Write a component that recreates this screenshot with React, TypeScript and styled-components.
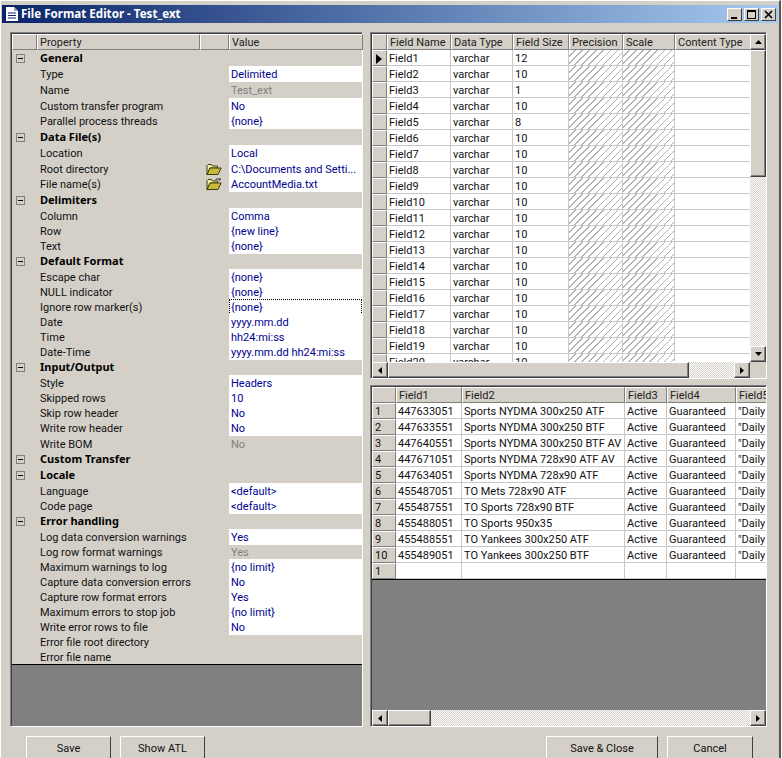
import React from "react";
import styled, { createGlobalStyle } from "styled-components";

const Global = createGlobalStyle`
  html, body { margin: 0; padding: 0; background: #fff; }
  #root { width: 782px; height: 758px; overflow: hidden; }
  * { box-sizing: border-box; }
`;
const FONT = `"Roboto", "Liberation Sans", sans-serif`;
const BOLD = `"Noto Sans", "Liberation Sans", sans-serif`;
const BG = "#d4d0c8";
const DITHER = `repeating-conic-gradient(#d4d0c8 0 25%, #fff 0 50%) 0 0 / 2px 2px`;
const BEVEL = `border: 1px solid; border-color: #fff #808080 #808080 #fff;`;

const Shell = styled.div`
  width: 781px; height: 758px; overflow: hidden; background: ${BG};
  border-top: 1px solid #fff; border-right: 2px solid #555; border-left: 1px solid #fff;
  font: 11px/15px ${FONT}; color: #111; display: flex; flex-direction: column; padding-top: 4px;
`;
const TitleBar = styled.div`
  flex: none; height: 18px; margin: 0 1px 0 1px; padding-left: 4px;
  background: linear-gradient(90deg, #0a246a 0%, #a6caf0 100%);
  display: flex; align-items: center;
`;
const TitleText = styled.span`
  color: #fff; font: bold 11.6px/18px ${BOLD}; flex: 1; margin-left: 3px;
`;
const WinBtn = styled.div`
  width: 15px; height: 13px; margin-right: 2px; background: ${BG};
  border: 1px solid; border-color: #fff #404040 #404040 #fff;
  display: flex; align-items: center; justify-content: center;
`;
const Main = styled.div`
  flex: none; display: flex; gap: 7px; margin-top: 9px; padding-left: 9px;
`;
const Sunken = styled.div`
  border: 1px solid; border-color: #808080 #fff #fff #808080;
  box-shadow: inset 1px 1px 0 #404040;
  padding: 1px 0 0 1px; background: ${BG};
`;
const LeftPanel = styled(Sunken)`
  width: 353px; height: 695px; display: flex; flex-direction: column;
`;
const RightColumn = styled.div`
  width: 397px; display: flex; flex-direction: column; gap: 6px;
`;
const TopGrid = styled(Sunken)`
  height: 347px; display: flex; flex-direction: column;
`;
const BottomGrid = styled(Sunken)`
  height: 342px; display: flex; flex-direction: column; overflow: hidden;
`;
const PropHead = styled.div`
  flex: none; height: 16px; display: grid; grid-template-columns: 25px 163px 29px 134px;
`;
const HeadCell = styled.div`
  background: ${BG}; ${BEVEL} padding: 1px 0 0 2px; color: #222; line-height: 13px; white-space: nowrap; overflow: hidden;
`;
const PropList = styled.div`
  flex: none; border-bottom: 1px solid #000; padding-bottom: 0;
`;
const PropRow = styled.div<{ $h: number }>`
  height: ${p => p.$h}px; display: grid; grid-template-columns: 28px 161px 28px 134px; align-items: stretch;
`;
const Exp = styled.div`
  display: flex; align-items: center; padding-left: 4px;
`;
const ExpBox = styled.div`
  width: 9px; height: 9px; border: 1px solid #808080; display: flex; align-items: center; justify-content: center;
  &::after { content: ""; width: 5px; height: 1px; background: #000; }
`;
const GroupLabel = styled.div`
  font: bold 11px/15px ${BOLD}; color: #000; white-space: nowrap; display: flex; align-items: center; padding-bottom: 1px;
`;
const PropLabel = styled.div`
  white-space: nowrap; display: flex; align-items: center; padding-top: 1px;
`;
const IconSlot = styled.div`
  display: flex; align-items: center; padding-left: 5px;
`;
const PropValue = styled.div<{ $off?: boolean; $blank?: boolean; $focus?: boolean }>`
  background: ${p => (p.$off || p.$blank ? "transparent" : "#fff")};
  color: ${p => (p.$off ? "#808080" : "#000090")};
  padding: 1px 0 0 2px; margin-right: 1px; white-space: nowrap; overflow: hidden; display: flex; align-items: center;
  outline: ${p => (p.$focus ? "1px dotted #000" : "none")}; outline-offset: -1px;
`;
const DarkArea = styled.div`
  flex: 1; background: #808080;
`;
const GridHead = styled.div<{ $cols: string }>`
  flex: none; height: 16px; display: grid; grid-template-columns: ${p => p.$cols}; overflow: hidden;
`;
const GridRow = styled.div<{ $cols: string }>`
  flex: none; height: 16px; display: grid; grid-template-columns: ${p => p.$cols}; overflow: hidden;
`;
const RowHead = styled.div`
  background: ${BG}; ${BEVEL} padding: 1px 0 0 2px; line-height: 13px; display: flex; align-items: center;
`;
const Cell = styled.div`
  background: #fff; border-right: 1px solid #c8c8c8; border-bottom: 1px solid #c8c8c8;
  padding: 1px 0 0 2px; line-height: 16px; white-space: nowrap; overflow: hidden;
`;
const Hatch = styled.div`
  border-right: 1px solid #c8c8c8; border-bottom: 1px solid #c8c8c8;
  background: repeating-linear-gradient(135deg, #fff 0 4px, #b4b4b4 4px 5px);
`;
const TopBody = styled.div`
  flex: none; height: 328px; display: flex;
`;
const TopContent = styled.div`
  flex: 1; overflow: hidden; display: flex; flex-direction: column; min-width: 0;
`;
const TopViewport = styled.div`
  flex: 1; overflow: hidden; display: flex; flex-direction: column; background: #fff;
`;
const VScroll = styled.div`
  flex: none; width: 16px; display: flex; flex-direction: column; background: ${DITHER};
`;
const ScrollBtn = styled.div`
  flex: none; width: 16px; height: 16px; background: ${BG};
  border: 1px solid; border-color: #fff #404040 #404040 #fff;
  display: flex; align-items: center; justify-content: center;
  box-shadow: inset -1px -1px 0 #808080;
`;
const VThumb = styled.div`
  flex: none; height: 127px; background: ${BG};
  border: 1px solid; border-color: #fff #404040 #404040 #fff;
  box-shadow: inset -1px -1px 0 #808080;
`;
const Spacer = styled.div`
  flex: 1;
`;
const HScroll = styled.div`
  flex: none; height: 16px; display: flex; background: ${DITHER};
`;
const HThumb = styled.div<{ $w: number }>`
  flex: none; width: ${p => p.$w}px; background: ${BG};
  border: 1px solid; border-color: #fff #404040 #404040 #fff;
  box-shadow: inset -1px -1px 0 #808080;
`;
const Corner = styled.div`
  flex: none; width: 16px; background: ${BG};
`;
const NewRowEnd = styled.div`
  flex: none; height: 1px; background: #000;
`;
const Footer = styled.div`
  flex: none; display: flex; margin-top: 9px; padding-left: 25px; gap: 9px; width: 752px;
`;
const Btn = styled.div<{ $w: number }>`
  flex: none; width: ${p => p.$w}px; height: 26px; background: ${BG};
  border: 1px solid; border-color: #fff #404040 #404040 #fff; text-align: center; line-height: 24px; color: #111;
`;
const FooterGap = styled.div`
  flex: 1;
`;

const Arrow = ({ d }: { d: "up" | "down" | "left" | "right" }) => {
  const pts = { up: "0,4 7,4 3.5,0", down: "0,0 7,0 3.5,4", left: "4,0 4,7 0,3.5", right: "0,0 0,7 4,3.5" }[d];
  const wide = d === "up" || d === "down";
  return <svg width={wide ? 7 : 4} height={wide ? 4 : 7}><polygon points={pts} fill="#000" /></svg>;
};
const Folder = ({ open }: { open?: boolean }) => (
  <svg width="16" height="13" viewBox="0 0 16 13">
    <path d="M1 2.5 L2 1.5 H5.5 L6.5 3 H11.5 V5 H4 L1 11.5 Z" fill="#f4f0a0" stroke="#3c3c10" strokeWidth="1" />
    <path d="M4 5 H15.2 L12 11.5 H1 Z" fill="#c8b838" stroke="#3c3c10" strokeWidth="1" />
    {open && <path d="M9 2.5 C10 .6 12.5 .2 14 1.5 M14.2 .2 V2 H12.4" fill="none" stroke="#222" strokeWidth="0.9" />}
  </svg>
);
const DocIcon = () => (
  <svg width="12" height="14" viewBox="0 0 12 14">
    <path d="M0 0 H8 L12 4 V14 H0 Z" fill="#fff" />
    <path d="M2 6 H10 M2 8.5 H10 M2 11 H10" stroke="#0a246a" strokeWidth="1" />
    <path d="M8 0 V4 H12 Z" fill="#8e9cc4" />
  </svg>
);

type P = { g?: boolean; l: string; v?: string; h: number; off?: boolean; blank?: boolean; focus?: boolean; icon?: 1 | 2 };
const props: P[] = [
  { g: true, l: "General", h: 16 },
  { l: "Type", v: "Delimited", h: 16 },
  { l: "Name", v: "Test_ext", h: 16, off: true },
  { l: "Custom transfer program", v: "No", h: 15 },
  { l: "Parallel process threads", v: "{none}", h: 16 },
  { g: true, l: "Data File(s)", h: 16 },
  { l: "Location", v: "Local", h: 16 },
  { l: "Root directory", v: "C:\\Documents and Setti...", h: 15, icon: 1 },
  { l: "File name(s)", v: "AccountMedia.txt", h: 16, icon: 2 },
  { g: true, l: "Delimiters", h: 16 },
  { l: "Column", v: "Comma", h: 15 },
  { l: "Row", v: "{new line}", h: 15 },
  { l: "Text", v: "{none}", h: 15 },
  { g: true, l: "Default Format", h: 16 },
  { l: "Escape char", v: "{none}", h: 15 },
  { l: "NULL indicator", v: "{none}", h: 15 },
  { l: "Ignore row marker(s)", v: "{none}", h: 15, focus: true },
  { l: "Date", v: "yyyy.mm.dd", h: 15 },
  { l: "Time", v: "hh24:mi:ss", h: 15 },
  { l: "Date-Time", v: "yyyy.mm.dd hh24:mi:ss", h: 15 },
  { g: true, l: "Input/Output", h: 16 },
  { l: "Style", v: "Headers", h: 15 },
  { l: "Skipped rows", v: "10", h: 15 },
  { l: "Skip row header", v: "No", h: 15 },
  { l: "Write row header", v: "No", h: 16 },
  { l: "Write BOM", v: "No", h: 15, off: true },
  { g: true, l: "Custom Transfer", h: 16 },
  { g: true, l: "Locale", h: 16 },
  { l: "Language", v: "<default>", h: 15 },
  { l: "Code page", v: "<default>", h: 15 },
  { g: true, l: "Error handling", h: 16 },
  { l: "Log data conversion warnings", v: "Yes", h: 15 },
  { l: "Log row format warnings", v: "Yes", h: 15, off: true },
  { l: "Maximum warnings to log", v: "{no limit}", h: 15 },
  { l: "Capture data conversion errors", v: "No", h: 15 },
  { l: "Capture row format errors", v: "Yes", h: 15 },
  { l: "Maximum errors to stop job", v: "{no limit}", h: 15 },
  { l: "Write error rows to file", v: "No", h: 15 },
  { l: "Error file root directory", h: 15, blank: true },
  { l: "Error file name", h: 15, blank: true },
];

const fieldSizes = [12, 10, 1, 10, 8, 10, 10, 10, 10, 10, 10, 10, 10, 10, 10, 10, 10, 10, 10, 10];
const TOP_COLS = "15px 64px 62px 56px 54px 52px 77px";
const BOT_COLS = "24px 66px 163px 42px 69px 32px";
const data = [
  ["447633051", "Sports NYDMA 300x250 ATF"],
  ["447633551", "Sports NYDMA 300x250 BTF"],
  ["447640551", "Sports NYDMA 300x250 BTF AV"],
  ["447671051", "Sports NYDMA 728x90 ATF AV"],
  ["447634051", "Sports NYDMA 728x90 ATF"],
  ["455487051", "TO Mets 728x90 ATF"],
  ["455487551", "TO Sports 728x90 BTF"],
  ["455488051", "TO Sports 950x35"],
  ["455488551", "TO Yankees 300x250 ATF"],
  ["455489051", "TO Yankees 300x250 BTF"],
];

export default function App() {
  return (
    <Shell>
      <Global />
      <TitleBar>
        <DocIcon />
        <TitleText>File Format Editor - Test_ext</TitleText>
        <WinBtn>
          <svg width="9" height="9"><rect x="1" y="7" width="6" height="2" fill="#000" /></svg>
        </WinBtn>
        <WinBtn>
          <svg width="9" height="9"><rect x="0.5" y="1" width="8" height="7.5" fill="none" stroke="#000" /><rect x="0" y="0" width="9" height="2" fill="#000" /></svg>
        </WinBtn>
        <WinBtn>
          <svg width="9" height="9"><path d="M1 1 L8 8 M8 1 L1 8" stroke="#000" strokeWidth="1.6" /></svg>
        </WinBtn>
      </TitleBar>
      <Main>
        <LeftPanel>
          <PropHead>
            <HeadCell />
            <HeadCell>Property</HeadCell>
            <HeadCell />
            <HeadCell>Value</HeadCell>
          </PropHead>
          <PropList>
            {props.map(p =>
              p.g ? (
                <PropRow key={p.l} $h={p.h}>
                  <Exp><ExpBox /></Exp>
                  <GroupLabel>{p.l}</GroupLabel>
                </PropRow>
              ) : (
                <PropRow key={p.l} $h={p.h}>
                  <Exp />
                  <PropLabel>{p.l}</PropLabel>
                  <IconSlot>{p.icon ? <Folder open={p.icon === 2} /> : null}</IconSlot>
                  <PropValue $off={p.off} $blank={p.blank} $focus={p.focus}>{p.v}</PropValue>
                </PropRow>
              )
            )}
          </PropList>
          <DarkArea />
        </LeftPanel>
        <RightColumn>
          <TopGrid>
            <TopBody>
              <TopContent>
                <GridHead $cols={TOP_COLS}>
                  <HeadCell />
                  {["Field Name", "Data Type", "Field Size", "Precision", "Scale", "Content Type"].map(h => (
                    <HeadCell key={h}>{h}</HeadCell>
                  ))}
                </GridHead>
                <TopViewport>
                  {fieldSizes.map((s, i) => (
                    <GridRow key={i} $cols={TOP_COLS}>
                      <RowHead>{i === 0 ? <svg width="7" height="10"><polygon points="1,0 1,10 7,5" fill="#000" /></svg> : null}</RowHead>
                      <Cell>Field{i + 1}</Cell>
                      <Cell>varchar</Cell>
                      <Cell>{s}</Cell>
                      <Hatch />
                      <Hatch />
                      <Cell />
                    </GridRow>
                  ))}
                </TopViewport>
              </TopContent>
              <VScroll>
                <ScrollBtn><Arrow d="up" /></ScrollBtn>
                <VThumb />
                <Spacer />
                <ScrollBtn><Arrow d="down" /></ScrollBtn>
              </VScroll>
            </TopBody>
            <HScroll>
              <ScrollBtn><Arrow d="left" /></ScrollBtn>
              <HThumb $w={301} />
              <Spacer />
              <ScrollBtn><Arrow d="right" /></ScrollBtn>
              <Corner />
            </HScroll>
          </TopGrid>
          <BottomGrid>
            <GridHead $cols={BOT_COLS}>
              <HeadCell />
              {["Field1", "Field2", "Field3", "Field4", "Field5"].map(h => (
                <HeadCell key={h}>{h}</HeadCell>
              ))}
            </GridHead>
            {data.map((d, i) => (
              <GridRow key={i} $cols={BOT_COLS}>
                <RowHead>{i + 1}</RowHead>
                <Cell>{d[0]}</Cell>
                <Cell>{d[1]}</Cell>
                <Cell>Active</Cell>
                <Cell>Guaranteed</Cell>
                <Cell>"Daily</Cell>
              </GridRow>
            ))}
            <GridRow $cols={BOT_COLS}>
              <RowHead>1</RowHead>
              <Cell /><Cell /><Cell /><Cell /><Cell />
            </GridRow>
            <NewRowEnd />
            <DarkArea />
            <HScroll>
              <ScrollBtn><Arrow d="left" /></ScrollBtn>
              <HThumb $w={43} />
              <Spacer />
              <ScrollBtn><Arrow d="right" /></ScrollBtn>
            </HScroll>
          </BottomGrid>
        </RightColumn>
      </Main>
      <Footer>
        <Btn $w={85}>Save</Btn>
        <Btn $w={85}>Show ATL</Btn>
        <FooterGap />
        <Btn $w={112}>Save &amp; Close</Btn>
        <Btn $w={86}>Cancel</Btn>
      </Footer>
    </Shell>
  );
}
